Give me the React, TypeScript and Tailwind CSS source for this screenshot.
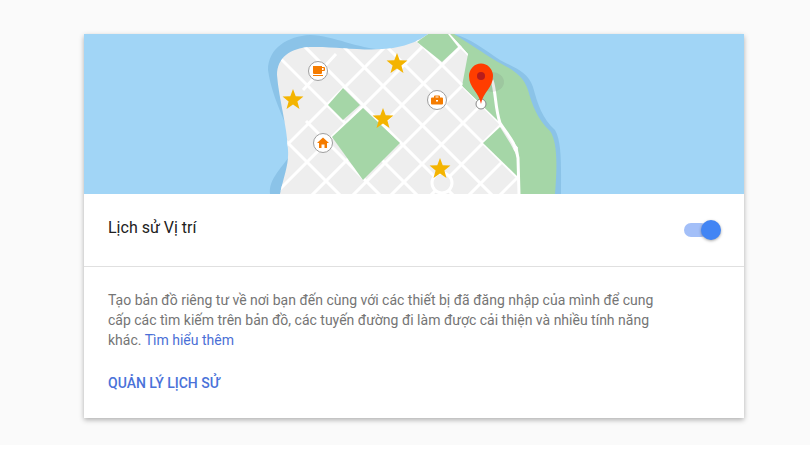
import React from 'react';

const fromBackslash = [-145, -185, -222, -258, -297, -340, -377, -414];
const fromSlash = [432, 469, 507, 548, 586, 626, 664, 695];

const landPath =
  'M280 194 C284 175 289 165 288 150 C287 125 279 100 277 75 C277 58 290 48 310 47 C335 46 365 52 393 48 C410 45 420 40 428 34 L450 34 L468 54 L462 86 L500 123 L518 148 L520 194 Z';

const Star = ({ x, y, r = 11 }: { x: number; y: number; r?: number }) => {
  const points = Array.from({ length: 10 }, (_, i) => {
    const a = -Math.PI / 2 + (i * Math.PI) / 5;
    const d = i % 2 === 0 ? r : r * 0.42;
    return `${x + d * Math.cos(a)},${y + d * Math.sin(a)}`;
  }).join(' ');
  return <polygon points={points} fill="#f4b400" />;
};

const MapPicture = () => (
  <svg viewBox="84 34 660 160" className="block w-full h-full">
    <defs>
      <clipPath id="land">
        <path d={landPath} />
      </clipPath>
    </defs>
    <rect x="84" y="34" width="660" height="160" fill="#a1d5f6" />
    {/* coast */}
    <path
      d="M270 194 C268 178 285 165 295 148 C290 130 272 100 268 70 C268 48 288 36 310 35 C335 36 355 48 385 50 C405 50 420 40 432 34 L453 34 C470 38 485 50 500 60 C515 68 528 72 533 87 C538 105 542 118 555 130 C562 142 561 165 561 194 Z"
      fill="#8bc3e8"
    />
    <path
      d="M410 194 L420 40 L432 34 L454 34 C470 44 485 54 493 59 C505 67 522 71 528 90 C532 105 538 120 550 131 C558 142 557 170 555 194 Z"
      fill="#a5d6a7"
    />
    <path d={landPath} fill="#eeeeee" />
    <g clipPath="url(#land)">
      {fromBackslash.map((c) => (
        <line key={c} x1={c === -185 ? 306 : 250} y1={(c === -185 ? 306 : 250) + c} x2="540" y2={540 + c} stroke="#fff" strokeWidth="3" />
      ))}
      {fromSlash.map((k) => (
        <line key={k} x1="250" y1={k - 250} x2="540" y2={k - 540} stroke="#fff" strokeWidth="3" />
      ))}
      <line x1="336" y1="54" x2="303" y2="90" stroke="#fff" strokeWidth="3" />
      <polygon points="417,42 428,34 448,34 458,47 442,62" fill="#a5d6a7" />
      <polygon points="328,105 343,88 360,105 343,120" fill="#a5d6a7" />
      <polygon points="332,137 363,108 400,143 363,180" fill="#a5d6a7" />
      <polygon points="500,127 483,143 518,177 518,158 510,143" fill="#a5d6a7" />
      <circle cx="442" cy="183" r="10" fill="#eeeeee" stroke="#fff" strokeWidth="3" />
    </g>
    {/* road along the shore */}
    <path d="M492 80 C496 92 495 108 500 123 C506 133 516 142 518 158 L519 194" fill="none" stroke="#fff" strokeWidth="3" />

    <Star x={397} y={64} />
    <Star x={293} y={100} />
    <Star x={383} y={119} />
    <Star x={440} y={169} />

    <g fill="#fff" stroke="#9e9e9e" strokeWidth="1">
      <circle cx="318" cy="71" r="9.5" />
      <circle cx="323" cy="143" r="9.5" />
      <circle cx="437" cy="100" r="9.5" />
    </g>
    {/* cup */}
    <path d="M313 66 h9 v1 h2 a1 1 0 0 1 1 1 v2 a1 1 0 0 1 -1 1 h-2 v2 a1 1 0 0 1 -1 1 h-7 a1 1 0 0 1 -1 -1 Z M322 68 v2 h1.600 v-2 Z M313 75 h10 v1 h-10 Z" fill="#f57c00" fillRule="evenodd" />
    {/* home */}
    <path d="M323 137.500 L329 143 H327 V148 H324.500 V144.500 H321.500 V148 H319 V143 H317 Z" fill="#f57c00" />
    {/* briefcase */}
    <path d="M435 95.500 h4 a1 1 0 0 1 1 1 v1 h2 a1 1 0 0 1 1 1 v5 a1 1 0 0 1 -1 1 h-10 a1 1 0 0 1 -1 -1 v-5 a1 1 0 0 1 1 -1 h2 v-1 a1 1 0 0 1 1 -1 Z M435.500 96.500 v1 h3 v-1 Z M436 100 v1.500 h2 v-1.500 Z" fill="#f57c00" fillRule="evenodd" />

    {/* pin */}
    <ellipse cx="492" cy="82" rx="12" ry="10" fill="#757575" fillOpacity="0.15" />
    <circle cx="481" cy="104" r="5" fill="#fff" stroke="#888" strokeWidth="1" />
    <path d="M481 104 C479 92 469 88 469 76 A12 12.500 0 0 1 493 76 C493 88 483 92 481 104 Z" fill="#ff3d00" />
    <circle cx="481" cy="76" r="4" fill="#b71c1c" />
  </svg>
);

const App: React.FC = () => {
  return (
    <div className="w-[810px] h-[450px] bg-white overflow-hidden font-['Roboto',sans-serif]">
      <div className="h-[445px] bg-[#fafafa] pt-[34px] pl-[84px]">
        <div className="w-[660px] h-[384px] bg-white shadow-[0_2px_5px_rgba(0,0,0,0.3)]">
          <div className="h-[160px]">
            <MapPicture />
          </div>

          <div className="h-[73px] flex items-center justify-between pl-6 pr-[23px] pb-[4px] border-b border-[#e0e0e0]">
            <span className="text-base text-[#212121]">Lịch sử Vị trí</span>
            <div className="relative w-[37px] h-[14px] top-[2px]">
              <div className="w-[24px] h-[14px] rounded-full bg-[#a3bff8]" />
              <div className="absolute -top-[3px] right-0 w-5 h-5 rounded-full bg-[#4285f4] shadow-[0_1px_3px_rgba(0,0,0,0.35)]" />
            </div>
          </div>

          <div className="px-6 pt-[23px]">
            <p className="w-[560px] text-sm leading-5 text-[#757575]">
              Tạo bản đồ riêng tư về nơi bạn đến cùng với các thiết bị đã đăng nhập của mình để cung cấp các tìm kiếm trên bản đồ, các tuyến đường đi làm được cải thiện và nhiều tính năng khác.{' '}
              <a className="text-[#4a6fd6]">Tìm hiểu thêm</a>
            </p>
            <div className="mt-[23px] text-sm leading-5 font-medium text-[#4a72d9]">QUẢN LÝ LỊCH SỬ</div>
          </div>
        </div>
      </div>
    </div>
  );
};

export default App;
